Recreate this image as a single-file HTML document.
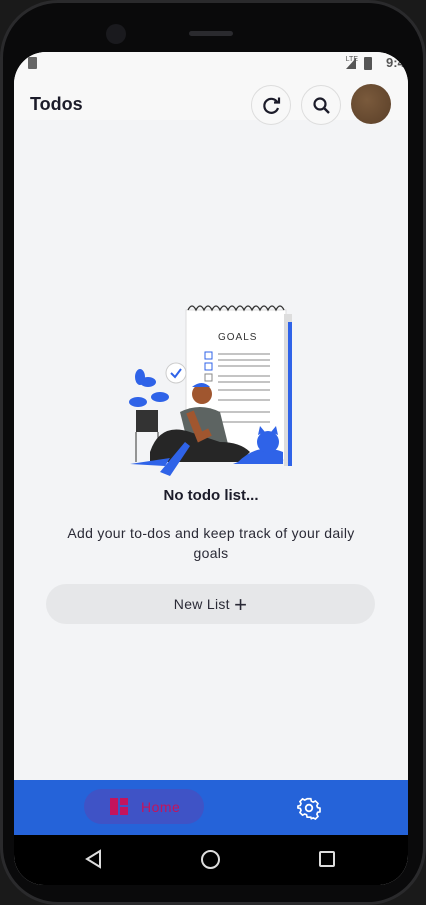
<!DOCTYPE html>
<html><head><style>
*{margin:0;padding:0;box-sizing:border-box}
body{width:426px;height:905px;background:#1a1a1a;position:relative;overflow:hidden;font-family:"Liberation Sans",sans-serif}
.phone{position:absolute;left:0;top:0;width:426px;height:905px;border-radius:58px;background:#0a0a0b;border:3px solid #2a2a2c}
.screen{position:absolute;left:14px;top:52px;width:394px;height:833px;border-radius:32px 32px 30px 30px;overflow:hidden;background:#f3f4f6}
.status{position:absolute;top:0;left:0;right:0;height:28px;background:#f8f8f8}
.appbar{position:absolute;top:28px;left:0;right:0;height:40px;background:#f8f8f8}
.title{position:absolute;left:16px;top:14px;font-size:18px;font-weight:bold;color:#1c1c2a}
.cb{position:absolute;top:5px;width:40px;height:40px;border-radius:50%;border:1px solid #ddd;background:#f8f8f8}
.nav{position:absolute;top:728px;left:0;right:0;height:55px;background:#2563d9}
.sys{position:absolute;top:783px;left:0;right:0;height:50px;background:#000}
</style></head><body>
<div class="phone"></div>
<div style="position:absolute;left:106px;top:24px;width:20px;height:20px;border-radius:50%;background:#1a1a1e"></div>
<div style="position:absolute;left:189px;top:31px;width:44px;height:5px;border-radius:3px;background:#2a2a2e"></div>
<div class="screen">
 <div class="status">
  <div style="position:absolute;left:14px;top:5px;width:9px;height:12px;background:#666;border-radius:1px"></div>
  <div style="position:absolute;right:50px;top:4px;font-size:7px;color:#555">LTE</div>
  <div style="position:absolute;right:52px;top:6px;width:0;height:0;border-left:10px solid transparent;border-bottom:11px solid #555"></div>
  <div style="position:absolute;right:36px;top:5px;width:8px;height:13px;background:#555;border-radius:1px"></div>
  <div style="position:absolute;right:-4px;top:3px;font-size:13px;color:#555;font-weight:bold">9:49</div>
 </div>
 <div class="appbar">
  <div class="title">Todos</div>
  <div class="cb" style="left:237px"><svg width="40" height="40" viewBox="0 0 40 40"><path d="M25.5 16.5A7 7 0 1 0 26 22" fill="none" stroke="#1c1c2a" stroke-width="2.2"/><path d="M22 16.5h5v-5" fill="none" stroke="#1c1c2a" stroke-width="2.2"/></svg></div>
  <div class="cb" style="left:287px"><svg width="40" height="40" viewBox="0 0 40 40"><circle cx="18" cy="18" r="5.5" fill="none" stroke="#1c1c2a" stroke-width="2.2"/><path d="M22 22l5 5" stroke="#1c1c2a" stroke-width="2.4"/></svg></div>
  <div style="position:absolute;left:337px;top:4px;width:40px;height:40px;border-radius:50%;background:radial-gradient(circle at 40% 40%,#7a5a3c,#5a3f28)"></div>
 </div>
 <svg style="position:absolute;left:106px;top:250px" width="190" height="180" viewBox="0 0 190 180">
  <rect x="66" y="8" width="100" height="150" fill="#fff" stroke="#ddd"/>
  <rect x="164" y="12" width="8" height="152" fill="#ddd"/><rect x="168" y="20" width="4" height="144" fill="#2f63e8"/>
  <path d="M68 8 q4 -8 8 0 q4 -8 8 0 q4 -8 8 0 q4 -8 8 0 q4 -8 8 0 q4 -8 8 0 q4 -8 8 0 q4 -8 8 0 q4 -8 8 0 q4 -8 8 0 q4 -8 8 0 q4 -8 8 0" fill="none" stroke="#333" stroke-width="1.3"/>
  <text x="98" y="38" font-size="10" letter-spacing="1" fill="#333" font-family="Liberation Sans">GOALS</text>
  <g stroke="#888" stroke-width="1"><path d="M98 52h52M98 58h52M98 64h52M98 74h52M98 80h52M98 88h52M98 98h52M98 110h52M98 120h52"/></g>
  <rect x="85" y="50" width="7" height="7" fill="none" stroke="#2f63e8"/><rect x="85" y="61" width="7" height="7" fill="none" stroke="#2f63e8"/><rect x="85" y="72" width="7" height="7" fill="none" stroke="#888"/>
  <circle cx="56" cy="71" r="10" fill="#fff" stroke="#ccc"/><path d="M51 71l4 4 6-8" fill="none" stroke="#2f63e8" stroke-width="2"/>
  <ellipse cx="28" cy="80" rx="8" ry="5" fill="#2f63e8"/><ellipse cx="18" cy="100" rx="9" ry="5" fill="#2f63e8"/><ellipse cx="40" cy="95" rx="9" ry="5" fill="#2f63e8"/><ellipse cx="20" cy="75" rx="5" ry="8" fill="#2f63e8"/>
  <rect x="16" y="108" width="22" height="22" fill="#333"/><path d="M16 130v30M38 130v30" stroke="#333"/>
  <circle cx="82" cy="92" r="10" fill="#a0562f"/><path d="M72 85q10-8 18 0" fill="#2f63e8"/>
  <path d="M60 110 q20-10 40 0 l10 40 h-40z" fill="#5d6462"/>
  <path d="M30 150 q10-30 40-20 l30 10 q20 0 30 10 l-10 10 h-90z" fill="#262626"/>
  <path d="M70 110 l10 25 l10-5" fill="none" stroke="#a0562f" stroke-width="8"/>
  <path d="M10 162 l40 -6 l-5 8z M40 170 l25-30 l5 4 -20 30z" fill="#2f63e8"/>
  <path d="M118 160 q20-20 45-10 l0 12 h-50z" fill="#2f63e8"/><circle cx="148" cy="140" r="11" fill="#2f63e8"/><path d="M138 133l2-9 5 6M158 133l-2-9-5 6" fill="#2f63e8"/>
 </svg>
 <div style="position:absolute;left:0;right:0;top:435px;text-align:center;font-size:15px;font-weight:bold;color:#1c1c2a">No todo list...</div>
 <div style="position:absolute;left:40px;right:40px;top:471px;text-align:center;font-size:14px;line-height:20px;color:#2a2a36;letter-spacing:0.3px">Add your to-dos and keep track of your daily goals</div>
 <div style="position:absolute;left:32px;width:329px;top:532px;height:40px;border-radius:20px;background:#e6e7e9;text-align:center;line-height:40px;font-size:14px;color:#2a2a36;letter-spacing:0.3px">New List <span style="font-size:22px;vertical-align:-3px">+</span></div>
 <div class="nav">
  <div style="position:absolute;left:70px;top:9px;width:120px;height:35px;border-radius:18px;background:#3f53c6"></div>
  <div style="position:absolute;left:96px;top:18px;width:8px;height:17px;background:#c4145c"></div>
  <div style="position:absolute;left:106px;top:18px;width:8px;height:7px;background:#c4145c"></div>
  <div style="position:absolute;left:106px;top:27px;width:8px;height:8px;background:#c4145c"></div>
  <div style="position:absolute;left:127px;top:19px;font-size:14px;color:#c4145c;letter-spacing:0.5px">Home</div>
  <svg style="position:absolute;left:283px;top:16px" width="24" height="24" viewBox="0 0 24 24"><path d="M10 2h4l.6 2.6 2 1 2.4-1.2 2.8 2.8-1.2 2.4.8 2 2.6.6v4l-2.6.6-.8 2 1.2 2.4-2.8 2.8-2.4-1.2-2 .8L14 22h-4l-.6-2.6-2-.8L5 19.8 2.2 17l1.2-2.4-.8-2L0 12v-2l2.6-.8.8-2L2.2 5 5 2.2l2.4 1.2 2-1z" transform="scale(.92) translate(1,1)" fill="none" stroke="#fff" stroke-width="1.8"/><circle cx="12" cy="12" r="3.3" fill="none" stroke="#fff" stroke-width="1.8"/></svg>
 </div>
 <div class="sys">
  <svg style="position:absolute;left:70px;top:14px" width="20" height="20"><path d="M16 2L3 10l13 8z" fill="none" stroke="#ddd" stroke-width="2"/></svg>
  <div style="position:absolute;left:187px;top:15px;width:19px;height:19px;border-radius:50%;border:2px solid #ddd"></div>
  <div style="position:absolute;left:305px;top:16px;width:16px;height:16px;border-radius:2px;border:2px solid #ddd"></div>
 </div>
</div>
</body></html>
